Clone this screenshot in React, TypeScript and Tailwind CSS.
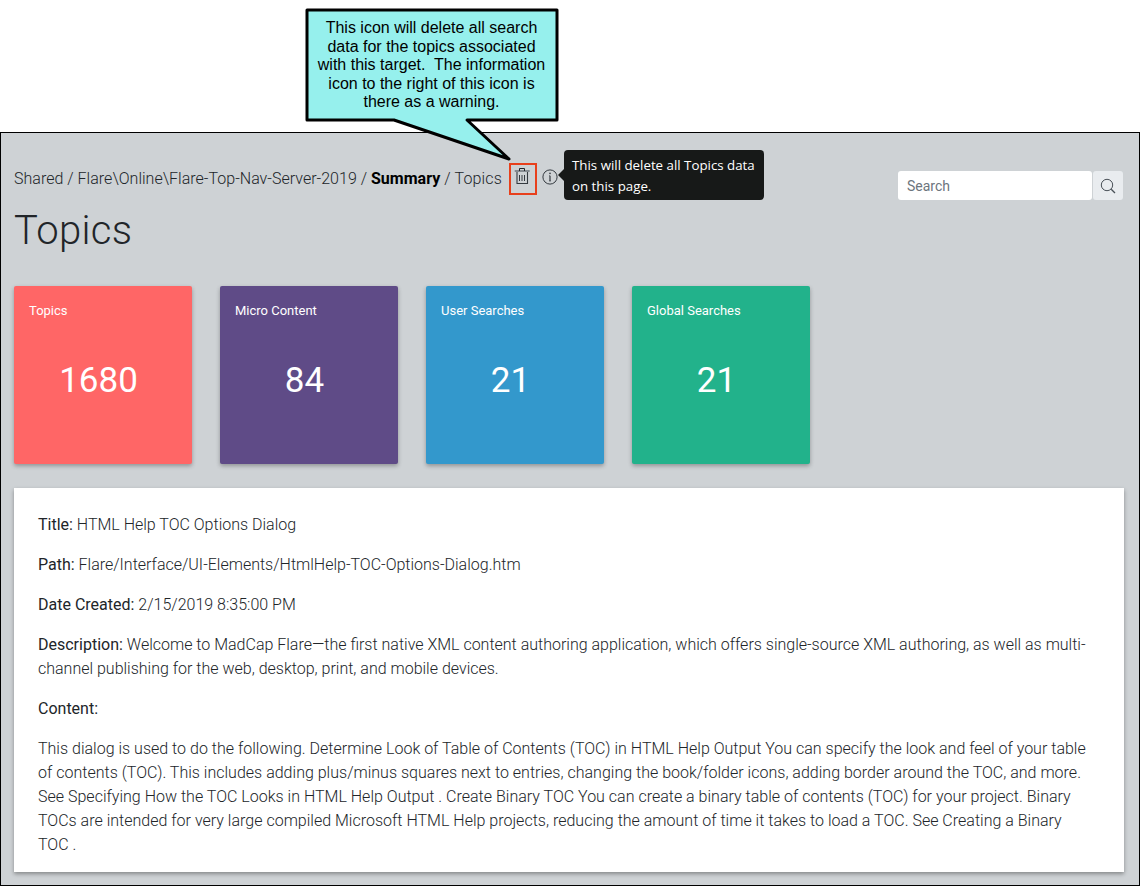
import React from "react";

const cards = [
  { label: "Topics", value: "1680", color: "bg-[#ff6666]" },
  { label: "Micro Content", value: "84", color: "bg-[#5f4b87]" },
  { label: "User Searches", value: "21", color: "bg-[#3398cc]" },
  { label: "Global Searches", value: "21", color: "bg-[#22b28b]" },
];

function Trash() {
  return (
    <svg className="mb-1 mr-[2px] block" width="16" height="18" viewBox="0 0 16 18" fill="none" stroke="#343a40" strokeWidth="1">
      <path d="M0.7 3H15.7" stroke="#747a80" strokeWidth="1.6" />
      <path d="M3 4V15.5H13.5V4" strokeWidth="1.1" />
      <path d="M5.5 7V13M8 7V13M10.5 7V13" />
      <path d="M5.5 3V0.5H10.5V3" stroke="#212529" />
    </svg>
  );
}

function Info() {
  return (
    <svg className="block" width="16" height="16" viewBox="0 0 16 16" fill="none" stroke="#343a40" strokeWidth="1">
      <circle cx="8" cy="8" r="7.1" />
      <path d="M8 6.7V12" strokeWidth="1.2" />
      <path d="M7 6.7H8M7 12H9" strokeWidth="0.6" />
      <circle cx="8" cy="4.4" r="0.8" fill="#343a40" stroke="none" />
    </svg>
  );
}

function Callout() {
  return (
    <div className="absolute left-[305px] top-[8px] h-[154px] w-[254px]">
      <svg className="absolute inset-0" width="254" height="154" viewBox="0 0 254 154">
        <path d="M2 2H252V112H162L204 151L89 112H2Z" fill="#96f0ed" stroke="#000" strokeWidth="3" strokeLinejoin="round" />
      </svg>
      <p className="relative pr-px pt-[11px] text-center font-['Liberation_Sans',Arial,sans-serif] text-[16px] leading-[18.5px] text-black whitespace-pre">
        {"This icon will delete all search\ndata for the topics associated\nwith this target.  The information\nicon to the right of this icon is\nthere as a warning."}
      </p>
    </div>
  );
}

export default function App() {
  return (
    <div className="relative h-[886px] w-[1140px] overflow-hidden bg-white pt-[132px] font-[Roboto,sans-serif] text-[#212529]">
      <main className="h-[754px] border border-black bg-[#ced2d5] px-[13px] pt-[30px]">
        <header className="flex h-[123px] justify-between">
          <div>
            <div className="flex h-8 items-center">
              <p className="w-[495px] whitespace-nowrap text-[16px] font-light leading-6 tracking-[0.02px]">
                Shared / Flare\Online\Flare-Top-Nav-Server-2019 / <b className="font-bold text-black">Summary</b> / <span className="tracking-[0.15px]">Topics</span>
              </p>
              <button className="flex h-8 w-7 items-center justify-center border-2 border-[#e8401c]"><Trash /></button>
              <span className="mb-1 ml-[5px]"><Info /></span>
            </div>
            <h1 className="mt-[12px] text-[40px] font-light leading-[48px] tracking-[0.3px]">Topics</h1>
          </div>
          <div className="mr-[3px] mt-2 flex h-[29px] w-[225px]">
            <span className="mr-px flex-1 rounded-[3px] bg-white pl-[9px] text-[14px] leading-[30px] text-[#6c757d]">Search</span>
            <button className="flex w-[30px] items-center justify-center rounded-[3px] bg-[#e9ecef]">
              <svg width="16" height="16" viewBox="0 0 16 16" fill="none" stroke="#495057"><circle cx="7" cy="7" r="5.7" /><path d="M11.2 11.2L15 15" strokeWidth="1.3" /></svg>
            </button>
          </div>
        </header>
        <section className="flex gap-7">
          {cards.map((c) => (
            <article key={c.label} className={`h-[178px] w-[178px] rounded-[2px] text-white shadow-[0_2px_4px_rgba(0,0,0,.3)] ${c.color}`}>
              <h2 className="pl-[15px] pt-[15px] text-[13px] font-normal leading-5">{c.label}</h2>
              <p className="mt-[34px] pr-[9px] text-center text-[35px] leading-[52px]">{c.value}</p>
            </article>
          ))}
        </section>
        <section className="mt-6 h-[384px] w-[1110px] space-y-4 bg-white pl-6 pr-[30px] pt-[25px] text-[16px] font-light leading-6 shadow-[0_2px_4px_rgba(0,0,0,.35)]">
          <p><b className="font-normal">Title:</b> HTML Help TOC Options Dialog</p>
          <p><b className="font-normal">Path:</b> Flare/Interface/UI-Elements/HtmlHelp-TOC-Options-Dialog.htm</p>
          <p><b className="font-normal">Date Created:</b> 2/15/2019 8:35:00 PM</p>
          <p><b className="font-normal">Description:</b> Welcome to MadCap Flare—the first native XML content authoring application, which offers single-source XML authoring, as well as multi-channel publishing for the web, desktop, print, and mobile devices.</p>
          <p><b className="font-normal">Content:</b></p>
          <p className="tracking-[0.01px]">This dialog is used to do the following. Determine Look of Table of Contents (TOC) in HTML Help Output You can specify the look and feel of your table of contents (TOC). This includes adding plus/minus squares next to entries, changing the book/folder icons, adding border around the TOC, and more. See Specifying How the TOC Looks in HTML Help Output . Create Binary TOC You can create a binary table of contents (TOC) for your project. Binary TOCs are intended for very large compiled Microsoft HTML Help projects, reducing the amount of time it takes to load a TOC. See Creating a Binary TOC&nbsp;.</p>
        </section>
      </main>
      <div className="absolute left-[558px] top-[150px] flex items-center">
        <svg width="6" height="12" viewBox="0 0 6 12"><path d="M0 6L6 0V12Z" fill="#171918" /></svg>
        <div className="h-[50px] w-[200px] whitespace-nowrap rounded-[4px] bg-[#171918] px-2 pt-[5px] font-['Open_Sans',sans-serif] text-[13.3px] leading-[21px] text-white">This will delete all Topics data<br />on this page.</div>
      </div>
      <Callout />
    </div>
  );
}
